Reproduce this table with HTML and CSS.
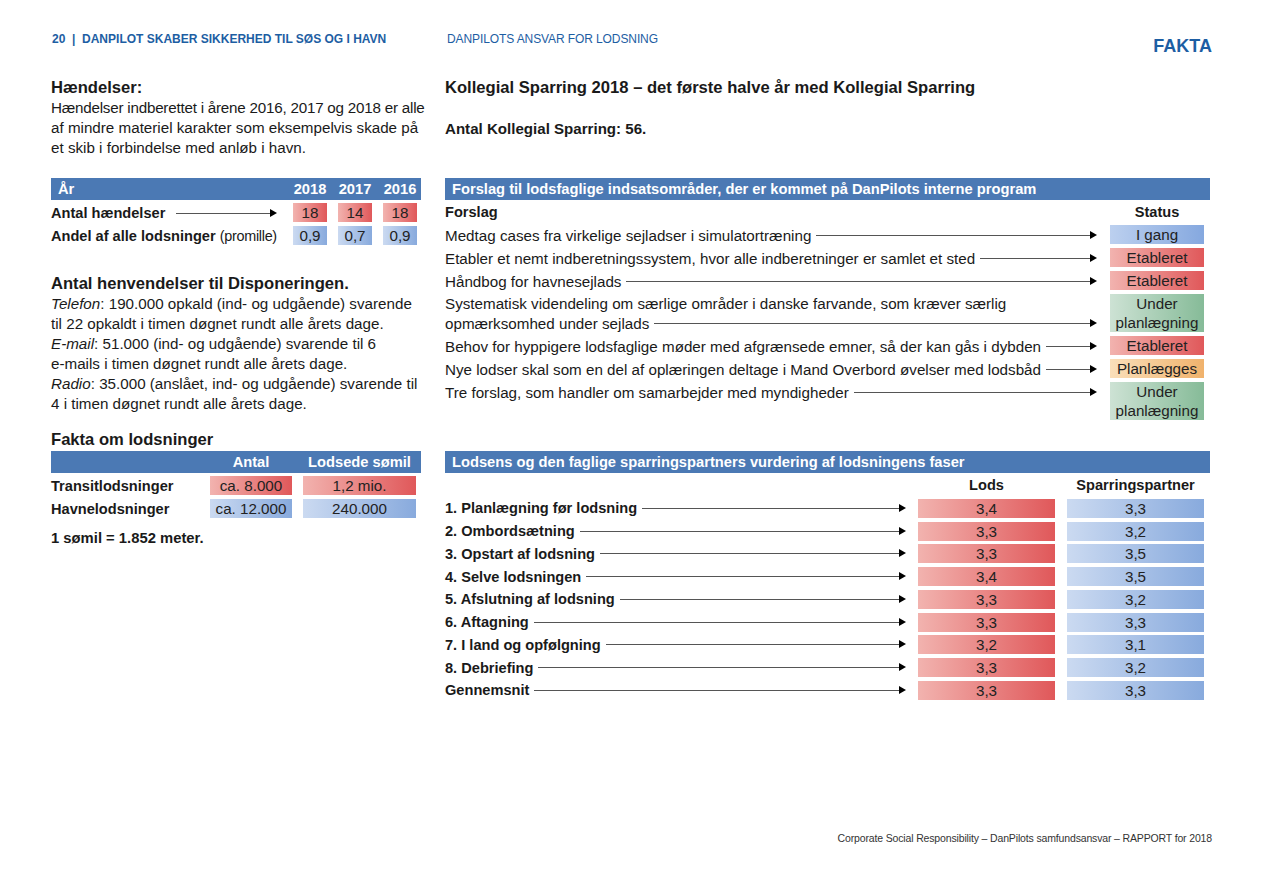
FILE: index.html
```html
<!DOCTYPE html>
<html lang="da">
<head>
<meta charset="utf-8">
<title>Fakta</title>
<link rel="stylesheet" href="styles.css">
</head>
<body>
<div class="page">
  <header class="top">
    <div class="run-left">20 &nbsp;|&nbsp; DANPILOT SKABER SIKKERHED TIL SØS OG I HAVN</div>
    <div class="run-mid">DANPILOTS ANSVAR FOR LODSNING</div>
    <div class="fakta">FAKTA</div>
  </header>

  <main class="cols">
    <section class="left">
      <h2 class="h">Hændelser:</h2>
      <p class="txt"><span class="tight">Hændelser indberettet i årene 2016, 2017 og 2018 er alle</span><br>af mindre materiel karakter som eksempelvis skade på<br>et skib i forbindelse med anløb i havn.</p>

      <div class="t1">
        <div class="bar t1-grid">
          <div class="bar-first">År</div>
          <div class="c">2018</div><div class="c">2017</div><div class="c">2016</div>
        </div>
        <div class="t1-grid row">
          <div class="lab"><b>Antal hændelser</b><span class="arr arr-left"></span></div>
          <div class="cell red">18</div><div class="cell red">14</div><div class="cell red">18</div>
        </div>
        <div class="t1-grid row">
          <div class="lab"><b>Andel af alle lodsninger</b>&nbsp;<span class="reg">(promille)</span></div>
          <div class="cell blue">0,9</div><div class="cell blue">0,7</div><div class="cell blue">0,9</div>
        </div>
      </div>

      <h2 class="h h2b">Antal henvendelser til Disponeringen.</h2>
      <p class="txt"><i>Telefon</i>: 190.000 opkald (ind- og udgående) svarende<br>til 22 opkaldt i timen døgnet rundt alle årets dage.<br><i>E-mail</i>: 51.000 (ind- og udgående) svarende til 6<br>e-mails i timen døgnet rundt alle årets dage.<br><i>Radio</i>: 35.000 (anslået, ind- og udgående) svarende til<br>4 i timen døgnet rundt alle årets dage.</p>

      <h2 class="h h3b">Fakta om lodsninger</h2>
      <div class="t2">
        <div class="bar t2-grid">
          <div></div>
          <div class="c">Antal</div><div class="c">Lodsede sømil</div>
        </div>
        <div class="t2-grid row">
          <div class="lab"><b>Transitlodsninger</b></div>
          <div class="cell red">ca. 8.000</div><div class="cell red">1,2 mio.</div>
        </div>
        <div class="t2-grid row">
          <div class="lab"><b>Havnelodsninger</b></div>
          <div class="cell blue">ca. 12.000</div><div class="cell blue">240.000</div>
        </div>
      </div>
      <p class="note">1 sømil = 1.852 meter.</p>
    </section>

    <section class="right">
      <h2 class="h">Kollegial Sparring 2018 – det første halve år med Kollegial Sparring</h2>
      <p class="count">Antal Kollegial Sparring: 56.</p>

      <div class="ft">
        <div class="bar bar-text">Forslag til lodsfaglige indsatsområder, der er kommet på DanPilots interne program</div>
        <div class="frow fhead">
          <div class="lab"><b>Forslag</b></div>
          <div class="st-head">Status</div>
        </div>
        <div class="frow">
          <div class="lab"><span>Medtag cases fra virkelige sejladser i simulatortræning</span><span class="arr"></span></div>
          <div class="cell sblue">I gang</div>
        </div>
        <div class="frow">
          <div class="lab"><span>Etabler et nemt indberetningssystem, hvor alle indberetninger er samlet et sted</span><span class="arr"></span></div>
          <div class="cell red">Etableret</div>
        </div>
        <div class="frow">
          <div class="lab"><span>Håndbog for havnesejlads</span><span class="arr"></span></div>
          <div class="cell red">Etableret</div>
        </div>
        <div class="frow">
          <div class="lab-two">
            <div class="l1">Systematisk videndeling om særlige områder i danske farvande, som kræver særlig</div>
            <div class="lab"><span>opmærksomhed under sejlads</span><span class="arr"></span></div>
          </div>
          <div class="cell green two">Under<br>planlægning</div>
        </div>
        <div class="frow">
          <div class="lab"><span>Behov for hyppigere lodsfaglige møder med afgrænsede emner, så der kan gås i dybden</span><span class="arr"></span></div>
          <div class="cell red">Etableret</div>
        </div>
        <div class="frow">
          <div class="lab"><span>Nye lodser skal som en del af oplæringen deltage i Mand Overbord øvelser med lodsbåd</span><span class="arr"></span></div>
          <div class="cell orange">Planlægges</div>
        </div>
        <div class="frow">
          <div class="lab"><span>Tre forslag, som handler om samarbejder med myndigheder</span><span class="arr"></span></div>
          <div class="cell green two">Under<br>planlægning</div>
        </div>
      </div>

      <div class="lt">
        <div class="bar bar-text">Lodsens og den faglige sparringspartners vurdering af lodsningens faser</div>
        <div class="lrow lhead">
          <div></div>
          <div class="st-head">Lods</div>
          <div class="st-head">Sparringspartner</div>
        </div>
        <div class="lrow"><div class="lab"><b>1. Planlægning før lodsning</b><span class="arr"></span></div><div class="cell red">3,4</div><div class="cell blue">3,3</div></div>
        <div class="lrow"><div class="lab"><b>2. Ombordsætning</b><span class="arr"></span></div><div class="cell red">3,3</div><div class="cell blue">3,2</div></div>
        <div class="lrow"><div class="lab"><b>3. Opstart af lodsning</b><span class="arr"></span></div><div class="cell red">3,3</div><div class="cell blue">3,5</div></div>
        <div class="lrow"><div class="lab"><b>4. Selve lodsningen</b><span class="arr"></span></div><div class="cell red">3,4</div><div class="cell blue">3,5</div></div>
        <div class="lrow"><div class="lab"><b>5. Afslutning af lodsning</b><span class="arr"></span></div><div class="cell red">3,3</div><div class="cell blue">3,2</div></div>
        <div class="lrow"><div class="lab"><b>6. Aftagning</b><span class="arr"></span></div><div class="cell red">3,3</div><div class="cell blue">3,3</div></div>
        <div class="lrow"><div class="lab"><b>7. I land og opfølgning</b><span class="arr"></span></div><div class="cell red">3,2</div><div class="cell blue">3,1</div></div>
        <div class="lrow"><div class="lab"><b>8. Debriefing</b><span class="arr"></span></div><div class="cell red">3,3</div><div class="cell blue">3,2</div></div>
        <div class="lrow"><div class="lab"><b>Gennemsnit</b><span class="arr"></span></div><div class="cell red">3,3</div><div class="cell blue">3,3</div></div>
      </div>
    </section>
  </main>

  <footer class="foot">Corporate Social Responsibility – DanPilots samfundsansvar – RAPPORT for 2018</footer>
</div>
</body>
</html>
```

FILE: styles.css
```css
* { box-sizing: border-box; }
html, body { margin: 0; padding: 0; background: #fff; }
body {
  font-family: "Liberation Sans", Arial, sans-serif;
  color: #1a1a1a;
  font-size: 15.2px;
}
.page {
  width: 1262px;
  height: 892px;
  padding: 32px 50px 48px 51px;
  display: flex;
  flex-direction: column;
}
.top {
  display: flex;
  align-items: flex-start;
  color: #1d5ea3;
  height: 46px;
}
.run-left {
  font-weight: bold;
  font-size: 12px;
  width: 396px;
  padding-left: 1px;
}
.run-mid {
  font-size: 12px;
  flex: 1;
  letter-spacing: -0.1px;
}
.fakta {
  font-weight: bold;
  font-size: 18px;
  margin-top: 4px;
}
.cols {
  display: flex;
  gap: 24px;
  flex: 1;
}
.left { width: 370px; }
.right { flex: 1; margin-right: 2px; }
.h {
  margin: 0;
  font-size: 16.6px;
  font-weight: bold;
  line-height: 20px;
}
.txt {
  margin: 0 -20px 0 0;
  line-height: 20px;
  font-size: 15.2px;
  white-space: nowrap;
}
.tight { letter-spacing: -0.22px; }
.bar {
  background: #4b79b4;
  color: #fff;
  font-weight: bold;
  font-size: 14.7px;
  height: 22px;
  line-height: 22px;
}
.bar-first { padding-left: 7px; }
.bar-text { padding-left: 7px; }
.c { text-align: center; }
.t1 { margin-top: 20px; }
.t1-grid {
  display: grid;
  grid-template-columns: 1fr 34px 34px 34px;
  column-gap: 11px;
  padding-right: 4px;
}
.row { margin-top: 3px; }
.lab {
  display: flex;
  align-items: center;
  height: 20px;
  white-space: nowrap;
  font-size: 15.2px;
}
.lab b { font-weight: bold; font-size: 14.6px; }
.lab .reg { font-size: 14.4px; letter-spacing: -0.3px; }
.cell {
  height: 19px;
  line-height: 19px;
  text-align: center;
  font-size: 15.2px;
  color: #222;
}
.red { background: linear-gradient(90deg, #f2b3af 0%, #e0585a 100%); }
.blue { background: linear-gradient(90deg, #cbdaf1 0%, #88aadd 100%); }
.sblue { background: linear-gradient(90deg, #bcd0ef 0%, #85a8df 100%); }
.green { background: linear-gradient(90deg, #cde2d4 0%, #86bb98 100%); }
.orange { background: linear-gradient(90deg, #fadfba 0%, #f0b26c 100%); }
.cell.two { height: 38px; line-height: 19px; }

.arr {
  flex: 1;
  position: relative;
  height: 1px;
  background: #555;
  margin-left: 5px;
  margin-right: 7px;
}
.arr::after {
  content: "";
  position: absolute;
  right: -7px;
  top: -4px;
  border-left: 7px solid #000;
  border-top: 4.5px solid transparent;
  border-bottom: 4.5px solid transparent;
}
.arr-left { margin-left: 11px; margin-right: 12px; }

.h2b { margin-top: 28px; }
.h3b { margin-top: 16px; }
.t2 { margin-top: 1px; }
.t2-grid {
  display: grid;
  grid-template-columns: 1fr 82px 113px;
  column-gap: 11px;
  padding-right: 5px;
}
.note {
  margin: 9px 0 0;
  font-weight: bold;
  font-size: 14.8px;
  line-height: 20px;
}

.count {
  margin: 21px 0 0;
  font-weight: bold;
  font-size: 15.1px;
  line-height: 20px;
}
.ft { margin-top: 39px; }
.frow {
  display: grid;
  grid-template-columns: 1fr 94px;
  column-gap: 13px;
  padding-right: 6px;
  margin-top: 3px;
  align-items: start;
}
.fhead .lab, .fhead .st-head { height: 19px; line-height: 19px; }
.st-head {
  text-align: center;
  font-weight: bold;
  font-size: 14.6px;
  height: 20px;
  line-height: 20px;
}
.lab-two .l1 {
  height: 19px;
  line-height: 19px;
  white-space: nowrap;
  font-size: 15.2px;
}

.lt { margin-top: 31px; }
.lrow {
  display: grid;
  grid-template-columns: 1fr 137px 137px;
  column-gap: 12px;
  padding-right: 6px;
  margin-top: 3.75px;
  align-items: center;
}
.lrow .lab { height: 19px; }
.lrow.lhead { margin-top: 3px; }
.lrow .st-head { height: 19px; line-height: 19px; }

.foot {
  text-align: right;
  font-size: 10.5px;
  color: #333;
  letter-spacing: -0.15px;
  margin-top: auto;
}
```
